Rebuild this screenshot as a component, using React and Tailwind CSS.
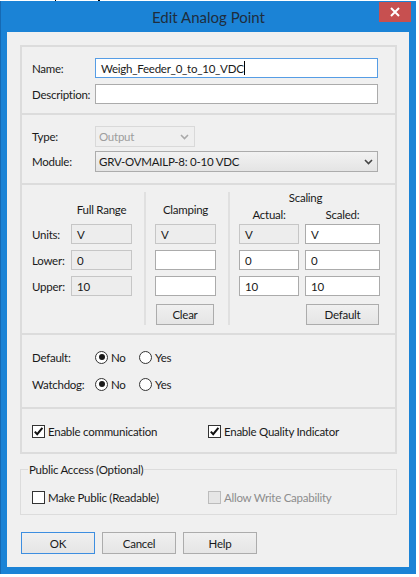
import React from "react";

function Chevron({ color = "#333" }) {
  return (
    <svg width="9" height="6" viewBox="0 0 9 6">
      <path d="M1 1 L4.5 4.5 L8 1" fill="none" stroke={color} strokeWidth="1.6" />
    </svg>
  );
}

function Check() {
  return (
    <svg width="11" height="11" viewBox="0 0 11 11">
      <path d="M1.8 5.6 L4.2 8.2 L9.4 1.8" fill="none" stroke="#111" strokeWidth="2" />
    </svg>
  );
}

function CheckBox({ checked, disabled, label }) {
  return (
    <div className="flex items-center h-[20px]">
      <div
        className={
          disabled
            ? "w-[13px] h-[13px] border border-[#bcbcbc] bg-[#e6e6e6] flex items-center justify-center"
            : "w-[13px] h-[13px] border border-[#333333] bg-white flex items-center justify-center"
        }
      >
        {checked ? <Check /> : null}
      </div>
      <span className={disabled ? "ml-[3px] text-[#8d8d8d]" : "ml-[3px]"}>{label}</span>
    </div>
  );
}

function Radio({ checked, label }) {
  return (
    <div className="flex items-center h-[20px]">
      <div className="w-[13px] h-[13px] rounded-full border border-[#333333] bg-white flex items-center justify-center">
        {checked ? <div className="w-[6px] h-[6px] rounded-full bg-[#1a1a1a]" /> : null}
      </div>
      <span className="ml-[3px]">{label}</span>
    </div>
  );
}

function Field({ value = "", disabled, width }) {
  return (
    <div
      className={
        (disabled
          ? "border border-[#c6c6c6] bg-[#ededed] "
          : "border border-[#ababab] bg-white ") +
        "h-[20px] flex items-center pl-[5px] shrink-0"
      }
      style={{ width }}
    >
      <span>{value}</span>
    </div>
  );
}

function Button({ children, width, primary, className = "" }) {
  return (
    <div
      className={
        (primary ? "border border-[#3d8ee0] " : "border border-[#acacac] ") +
        "bg-gradient-to-b from-[#f0f0f0] to-[#e5e5e5] flex items-center justify-center " +
        className
      }
      style={{ width }}
    >
      {children}
    </div>
  );
}

export default function App() {
  return (
    <div className="w-[419px] h-[577px] bg-white overflow-hidden font-['Lato',sans-serif] text-[11.5px] tracking-[-0.25px] leading-[15px] text-[#1a1a1a]">
      <div className="h-[1px] flex">
        <div className="ml-[55px] w-[1px] h-[1px] bg-black" />
        <div className="ml-[42px] w-[2px] h-[1px] bg-black" />
      </div>
      <div className="w-[416px] h-[573px] bg-[#1b83d6] border-l border-[#1669b3] flex flex-col">
        {/* Title bar */}
        <div className="h-[31px] relative flex items-center justify-center">
          <span className="text-[15px] tracking-normal leading-[18px] text-[#1f2d3d] mt-[1px]">Edit Analog Point</span>
          <div className="absolute top-[1px] right-[5px] w-[32px] h-[20px] bg-[#c75050] flex items-center justify-center">
            <svg width="10" height="10" viewBox="0 0 10 10">
              <path d="M1 1 L9 9 M9 1 L1 9" stroke="white" strokeWidth="2" />
            </svg>
          </div>
        </div>

        {/* Client */}
        <div className="ml-[6px] w-[402px] h-[535px] bg-[#f0f0f0] flex flex-col pt-[13px]">
          <div className="ml-[13px] w-[377px] border-2 border-[#dcdcdc] flex flex-col">
            {/* Section 1 */}
            <div className="h-[66px] flex flex-col pt-[11px] pl-[10px] gap-[6px]">
              <div className="flex items-center h-[20px]">
                <span className="w-[63px]">Name:</span>
                <div className="w-[283px] h-[20px] border border-[#569de5] bg-white flex items-center pl-[5px]">
                  <span>Weigh_Feeder_0_to_10_VDC</span>
                  <div className="w-[1px] h-[14px] bg-black" />
                </div>
              </div>
              <div className="flex items-center h-[20px]">
                <span className="w-[63px]">Description:</span>
                <div className="w-[283px] h-[20px] border border-[#ababab] bg-white" />
              </div>
            </div>
            <div className="h-[2px] bg-[#dcdcdc]" />
            {/* Section 2 */}
            <div className="h-[68px] flex flex-col pt-[11px] pl-[10px] gap-[4px]">
              <div className="flex items-center h-[21px]">
                <span className="w-[63px]">Type:</span>
                <div className="w-[100px] h-[21px] border border-[#d9d9d9] bg-[#efefef] flex items-center justify-between pl-[3px] pr-[5px] text-[#9d9d9d]">
                  <span>Output</span>
                  <Chevron color="#a9a9a9" />
                </div>
              </div>
              <div className="flex items-center h-[21px]">
                <span className="w-[63px]">Module:</span>
                <div className="w-[283px] h-[21px] border border-[#acacac] bg-gradient-to-b from-[#f2f2f2] to-[#e4e4e4] flex items-center justify-between pl-[3px] pr-[4px]">
                  <span>GRV-OVMAILP-8: 0-10 VDC</span>
                  <Chevron color="#444" />
                </div>
              </div>
            </div>
            <div className="h-[2px] bg-[#dcdcdc]" />
            {/* Section 3 */}
            <div className="h-[148px] flex pl-[10px]">
              <div className="w-[39px] flex flex-col pt-[39px] gap-[6px]">
                <div className="h-[20px] flex items-center">Units:</div>
                <div className="h-[20px] flex items-center">Lower:</div>
                <div className="h-[20px] flex items-center">Upper:</div>
              </div>
              <div className="w-[61px] flex flex-col gap-[6px]">
                <div className="h-[33px] flex items-end justify-center pb-[1px]">Full Range</div>
                <Field value="V" disabled width={61} />
                <Field value="0" disabled width={61} />
                <Field value="10" disabled width={61} />
              </div>
              <div className="ml-[12px] mt-[7px] mb-[8px] w-[2px] bg-[#e0e0e0]" />
              <div className="ml-[9px] w-[61px] flex flex-col gap-[6px]">
                <div className="h-[33px] flex items-end justify-center pb-[1px]">Clamping</div>
                <Field value="V" disabled width={61} />
                <Field width={61} />
                <Field width={61} />
                <Button width={58} className="ml-[1px] mt-[2px] h-[21px]">Clear</Button>
              </div>
              <div className="ml-[12px] mt-[7px] mb-[8px] w-[2px] bg-[#e0e0e0]" />
              <div className="ml-[9px] flex flex-col">
                <div className="h-[39px] flex flex-col pt-[5px]">
                  <div className="h-[15px] text-center pr-[8px]">Scaling</div>
                  <div className="mt-[2px] h-[15px] flex">
                    <div className="w-[60px] text-center">Actual:</div>
                    <div className="ml-[6px] w-[75px] text-center">Scaled:</div>
                  </div>
                </div>
                <div className="flex flex-col gap-[6px]">
                  <div className="flex gap-[6px]">
                    <Field value="V" disabled width={60} />
                    <Field value="V" width={75} />
                  </div>
                  <div className="flex gap-[6px]">
                    <Field value="0" width={60} />
                    <Field value="0" width={75} />
                  </div>
                  <div className="flex gap-[6px]">
                    <Field value="10" width={60} />
                    <Field value="10" width={75} />
                  </div>
                </div>
                <Button width={73} className="ml-[67px] mt-[8px] h-[21px]">Default</Button>
              </div>
            </div>
            <div className="h-[2px] bg-[#dcdcdc]" />
            {/* Section 4 */}
            <div className="h-[72px] flex flex-col pt-[12px] pl-[10px] gap-[7px]">
              <div className="flex items-center">
                <span className="w-[63px]">Default:</span>
                <div className="w-[44px]"><Radio checked label="No" /></div>
                <Radio label="Yes" />
              </div>
              <div className="flex items-center">
                <span className="w-[63px]">Watchdog:</span>
                <div className="w-[44px]"><Radio checked label="No" /></div>
                <Radio label="Yes" />
              </div>
            </div>
            <div className="h-[2px] bg-[#dcdcdc]" />
            {/* Section 5 */}
            <div className="h-[43px] flex pt-[12px] pl-[10px]">
              <div className="w-[176px]"><CheckBox checked label="Enable communication" /></div>
              <CheckBox checked label="Enable Quality Indicator" />
            </div>
          </div>

          {/* Public access */}
          <fieldset className="ml-[13px] mt-[8px] w-[377px] border border-[#dcdcdc] pl-[11px] pt-[10px] pb-[7px]">
            <legend className="ml-[-4px] px-[1px] leading-[15px]">Public Access (Optional)</legend>
            <div className="flex">
              <div className="w-[176px]"><CheckBox label="Make Public (Readable)" /></div>
              <CheckBox disabled label="Allow Write Capability" />
            </div>
          </fieldset>

          {/* Buttons */}
          <div className="mt-[17px] ml-[14px] flex gap-[7px]">
            <Button primary width={74} className="h-[22px]">OK</Button>
            <Button width={74} className="h-[22px]">Cancel</Button>
            <Button width={74} className="h-[22px]">Help</Button>
          </div>
        </div>
      </div>
    </div>
  );
}
